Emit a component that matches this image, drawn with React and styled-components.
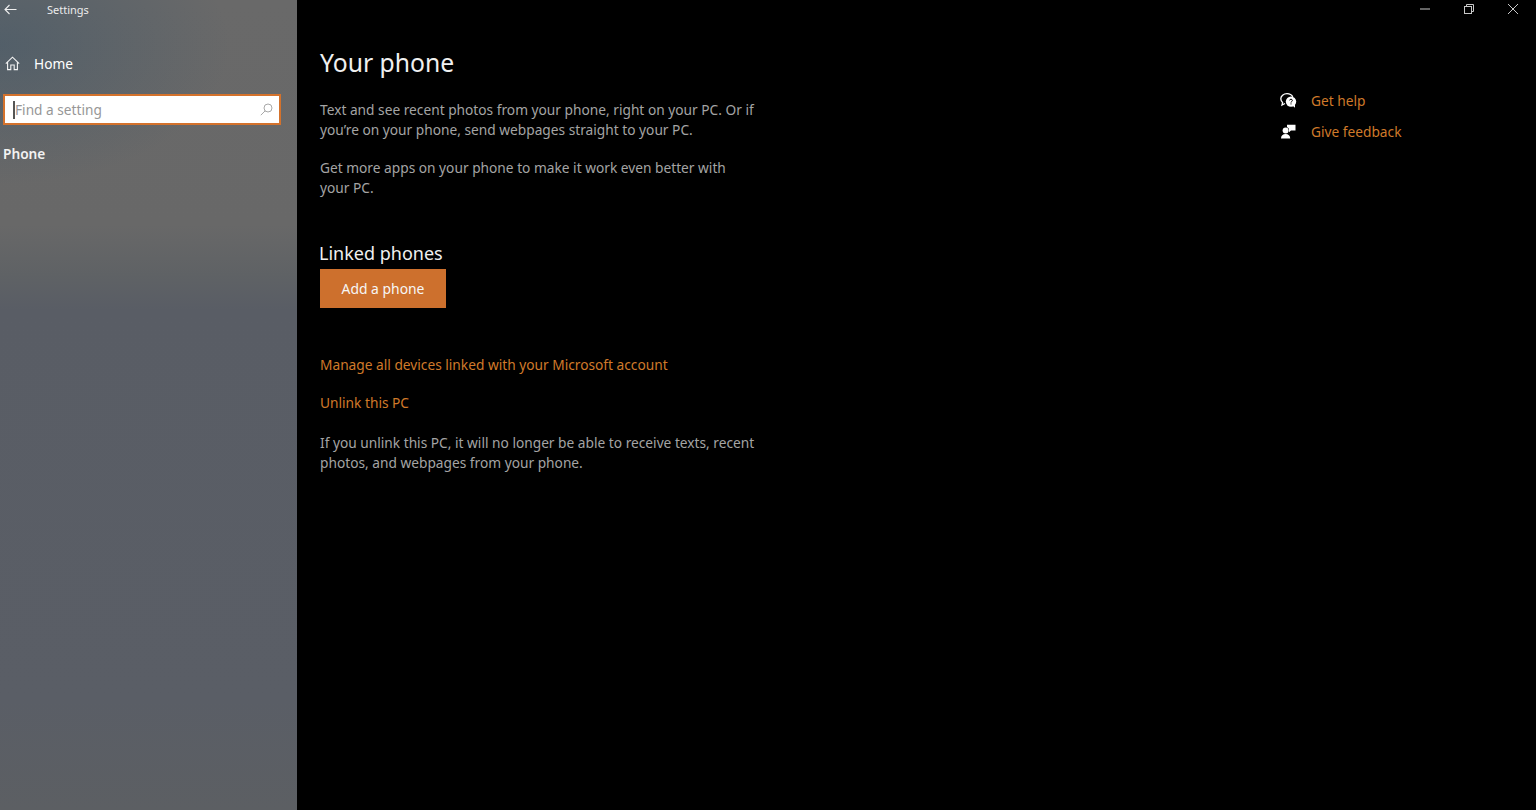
import styled, { createGlobalStyle } from 'styled-components';

const GlobalStyle = createGlobalStyle`
    html, body {
        margin: 0;
        height: 100%;
        background-color: #000;
    }
    #root {
        height: 100%;
    }
`

const Wrapper = styled.div`
    display: flex;
    width: 1536px;
    height: 810px;
    overflow: hidden;
    font-family: "Noto Sans", "Open Sans", sans-serif;
    background-color: #000;
`

const Sidebar = styled.nav`
    width: 297px;
    flex-shrink: 0;
    display: flex;
    flex-direction: column;
    color: #fff;
    background:
        radial-gradient(ellipse 230px 140px at 0 45px, rgba(60, 85, 105, 0.5), rgba(60, 85, 105, 0)),
        linear-gradient(180deg, #696969 0, #686868 225px, #5f6265 275px, #595d65 310px, #5a5e66 700px, #5c5f63 810px);
`

const TitleRow = styled.div`
    height: 18px;
    display: flex;
    align-items: center;
    padding-left: 4px;
    font-size: 11px;
    color: #ececec;
    svg {
        margin-right: 30px;
    }
`

const HomeRow = styled.a`
    display: flex;
    align-items: center;
    height: 20px;
    margin-top: 35px;
    padding-left: 5px;
    font-size: 13.7px;
    color: #fff;
    svg {
        margin-right: 14px;
    }
`

const SearchBox = styled.div`
    box-sizing: border-box;
    height: 31px;
    width: 278px;
    margin: 21px 0 0 3px;
    border: 2px solid #d4722c;
    background-color: #fff;
    display: flex;
    align-items: center;
    padding: 0 6px 0 9px;
    font-size: 13.7px;
    color: #979797;
    > span {
        flex: 1;
        border-left: 2px solid #555;
        margin-left: -1px;
        line-height: 18px;
    }
`

const Section = styled.div`
    margin: 19px 0 0 3px;
    font-size: 13.7px;
    font-weight: 600;
    line-height: 20px;
    color: #f2f2f2;
`

const Main = styled.main`
    flex: 1;
    display: flex;
    flex-direction: column;
    min-width: 0;
`

const WindowBar = styled.div`
    height: 18px;
    display: flex;
    justify-content: flex-end;
    padding-right: 1px;
`

const WindowButton = styled.div`
    width: 44px;
    display: flex;
    align-items: center;
    justify-content: center;
    color: #c8c8c8;
`

const Body = styled.div`
    flex: 1;
    display: flex;
    padding-left: 23px;
`

const Content = styled.div`
    width: 960px;
    flex-shrink: 0;
`

const Title = styled.h1`
    margin: 26px 0 0;
    font-size: 24.7px;
    font-weight: 400;
    line-height: 38px;
    color: #f0f0f0;
`

const Paragraph = styled.p`
    width: 436px;
    margin: ${props => props.$top || 0}px 0 0;
    font-size: 13.72px;
    line-height: 19.5px;
    color: #a4a4a4;
`

const Subtitle = styled.h2`
    margin: 43px 0 0 -1px;
    font-size: 18px;
    font-weight: 400;
    line-height: 26px;
    color: #f0f0f0;
`

const Button = styled.button`
    display: block;
    width: 126px;
    height: 39px;
    margin-top: 3px;
    padding: 0;
    border: 0;
    background-color: #cd702d;
    color: #f6f6f6;
    font-family: inherit;
    font-size: 13.9px;
`

const TextLink = styled.a`
    display: block;
    margin-top: ${props => props.$top}px;
    font-size: 13.72px;
    line-height: 20px;
    color: #d07a2a;
`

const Aside = styled.aside`
    display: flex;
    flex-direction: column;
    gap: 11px;
    margin-top: 72px;
`

const HelpRow = styled.a`
    display: flex;
    align-items: center;
    height: 20px;
    font-size: 13.72px;
    color: #d07a2a;
    svg {
        margin-right: 14px;
        flex-shrink: 0;
    }
`

const BackIcon = () => (
    <svg width="13" height="11" viewBox="0 0 13 11" fill="none" stroke="#f0f0f0" strokeWidth="1.1">
        <path d="M12.5 5.5H1M5.5 1L1 5.5L5.5 10" />
    </svg>
)

const HomeIcon = () => (
    <svg width="15" height="15" viewBox="0 0 15 15" fill="none" stroke="#f4f4f4" strokeWidth="1.1">
        <path d="M0.8 7.6L7.5 1.2L14.2 7.6M2.6 6.2V13.6H5.8V9H9.2V13.6H12.4V6.2" />
    </svg>
)

const SearchIcon = () => (
    <svg width="13" height="13" viewBox="0 0 13 13" fill="none" stroke="#a8a8a8" strokeWidth="1">
        <circle cx="8" cy="5" r="4" />
        <path d="M5.2 7.8L0.8 12.2" />
    </svg>
)

const HelpIcon = () => (
    <svg width="17" height="15" viewBox="0 0 17 15">
        <path d="M7 0.7C3.5 0.7 0.8 2.9 0.8 5.8C0.8 7.3 1.5 8.5 2.6 9.4L2 12L5 10.5" fill="none" stroke="#fff" strokeWidth="1.3" />
        <path d="M7 0.7C9.6 0.7 11.8 2 12.8 3.9" fill="none" stroke="#fff" strokeWidth="1.3" />
        <circle cx="11" cy="8.6" r="5.2" fill="#fff" />
        <path d="M13 13L15 14.8V10Z" fill="#fff" />
        <path d="M9.6 7.4C9.6 5.8 12.4 5.8 12.4 7.4C12.4 8.5 11 8.4 11 9.6" fill="none" stroke="#000" strokeWidth="1" />
        <rect x="10.5" y="10.4" width="1" height="1" fill="#000" />
    </svg>
)

const FeedbackIcon = () => (
    <svg width="17" height="15" viewBox="0 0 17 15" fill="#fff">
        <circle cx="5.6" cy="6.6" r="3" />
        <path d="M1 14.5C1 11.4 2.8 9.9 5.6 9.9C8.4 9.9 10.2 11.4 10.2 14.5Z" />
        <path d="M7 0.8H15.5V6.4H11L9 8.2V5.2C8.7 4.2 8 3.6 7 3.2Z" />
    </svg>
)

const MinimizeIcon = () => (
    <svg width="10" height="10" viewBox="0 0 10 10" stroke="currentColor" strokeWidth="1">
        <path d="M0 5H10" />
    </svg>
)

const RestoreIcon = () => (
    <svg width="10" height="10" viewBox="0 0 10 10" fill="none" stroke="currentColor" strokeWidth="1">
        <rect x="0.5" y="2.5" width="7" height="7" />
        <path d="M2.5 2.5V0.5H9.5V7.5H7.5" />
    </svg>
)

const CloseIcon = () => (
    <svg width="10" height="10" viewBox="0 0 10 10" stroke="currentColor" strokeWidth="1">
        <path d="M0 0L10 10M10 0L0 10" />
    </svg>
)

export default function App() {
    return (
        <Wrapper>
            <GlobalStyle />
            <Sidebar>
                <TitleRow>
                    <BackIcon />
                    <span>Settings</span>
                </TitleRow>
                <HomeRow>
                    <HomeIcon />
                    <span>Home</span>
                </HomeRow>
                <SearchBox>
                    <span>Find a setting</span>
                    <SearchIcon />
                </SearchBox>
                <Section>Phone</Section>
            </Sidebar>
            <Main>
                <WindowBar>
                    <WindowButton><MinimizeIcon /></WindowButton>
                    <WindowButton><RestoreIcon /></WindowButton>
                    <WindowButton><CloseIcon /></WindowButton>
                </WindowBar>
                <Body>
                    <Content>
                        <Title>Your phone</Title>
                        <Paragraph $top={18}>
                            Text and see recent photos from your phone, right on your PC. Or if you’re on your phone, send webpages straight to your PC.
                        </Paragraph>
                        <Paragraph $top={19}>
                            Get more apps on your phone to make it work even better with your PC.
                        </Paragraph>
                        <Subtitle>Linked phones</Subtitle>
                        <Button>Add a phone</Button>
                        <TextLink $top={47}>Manage all devices linked with your Microsoft account</TextLink>
                        <TextLink $top={18}>Unlink this PC</TextLink>
                        <Paragraph $top={20}>
                            If you unlink this PC, it will no longer be able to receive texts, recent photos, and webpages from your phone.
                        </Paragraph>
                    </Content>
                    <Aside>
                        <HelpRow><HelpIcon /><span>Get help</span></HelpRow>
                        <HelpRow><FeedbackIcon /><span>Give feedback</span></HelpRow>
                    </Aside>
                </Body>
            </Main>
        </Wrapper>
    )
}
